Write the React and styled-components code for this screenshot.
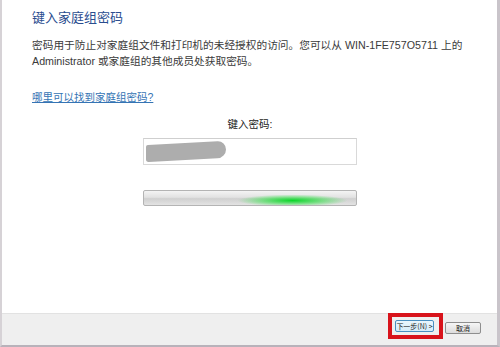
import React from "react";
import styled, { createGlobalStyle } from "styled-components";

const Global = createGlobalStyle`
  html, body {
    margin: 0;
    padding: 0;
    background: #ffffff;
  }
  body {
    font-family: "Liberation Sans", "Noto Sans CJK SC", sans-serif;
  }
`;

const Window = styled.div`
  width: 500px;
  height: 347px;
  box-sizing: border-box;
  display: flex;
  flex-direction: column;
  border-left: 2px solid #d6d2d6;
  border-right: 3px solid #c9c4ca;
  border-bottom: 2px solid #b8b2ba;
  background: #fff;
`;

const Body = styled.div`
  flex: 1;
  padding: 10px 0 0 30px;
  display: flex;
  flex-direction: column;
`;

const Row = styled.div`
  height: 16px;
  line-height: 16px;
  white-space: nowrap;
  font-size: ${(p) => p.$size || 10.7}px;
`;

const Title = styled(Row)`
  font-size: 13px;
  color: #2a4d8f;
`;

const Desc = styled.div`
  margin-top: 11px;
  color: #3a3a3a;
`;

const Link = styled(Row).attrs({ as: "a" })`
  display: block;
  margin-top: 20px;
  font-size: 10.5px;
  color: #3574b4;
  text-decoration: underline;
  align-self: flex-start;
`;

const Center = styled.div`
  width: 214px;
  margin: 11px 0 0 111px;
  display: flex;
  flex-direction: column;
  align-items: stretch;
`;

const Label = styled(Row)`
  text-align: center;
  font-size: 10.5px;
  color: #222;
`;

const Input = styled.div`
  margin-top: 6px;
  height: 27px;
  box-sizing: border-box;
  border: 1px solid #d9d9d9;
  border-top-color: #cfcfcf;
  position: relative;
  background: #fff;
`;

const Scribble = styled.div`
  position: absolute;
  left: 2px;
  top: 4px;
  width: 80px;
  height: 17px;
  background: #adadad;
  border-radius: 2px 9px 9px 3px;
  transform: skewY(-3deg);
`;

const Progress = styled.div`
  margin-top: 25px;
  height: 16px;
  box-sizing: border-box;
  border: 1px solid #b4b4b4;
  border-radius: 2px;
  background:
    radial-gradient(ellipse 55px 6px at 70% 68%, rgba(10, 215, 40, 1), rgba(60, 225, 80, 0.6) 55%, rgba(255,255,255,0) 100%),
    linear-gradient(#f4f4f4, #e2e2e2 45%, #d0d0d0 55%, #e3e3e3);
`;

const Footer = styled.div`
  height: 32px;
  box-sizing: border-box;
  border-top: 1px solid #e2e2e2;
  background: #efefef;
  display: flex;
  justify-content: flex-end;
  align-items: flex-start;
  gap: 2px;
  padding-right: 16px;
`;

const Highlight = styled.div`
  margin-top: -1px;
  border: 4px solid #d8131b;
  padding: 3px 5px 3px 3px;
  display: flex;
`;

const Button = styled.button`
  height: 12px;
  width: ${(p) => p.$w}px;
  margin-top: ${(p) => p.$top || 0}px;
  padding: 0;
  font-family: "Noto Sans CJK SC", sans-serif;
  font-size: 7px;
  line-height: 10px;
  white-space: nowrap;
  color: #222;
  border: 1px solid ${(p) => (p.$primary ? "#4a8fc0" : "#8e8e8e")};
  border-radius: 2px;
  background: ${(p) =>
    p.$primary
      ? "linear-gradient(#eaf6fd, #d4ecfa)"
      : "linear-gradient(#f6f6f6, #dcdcdc)"};
`;

export default function App() {
  return (
    <>
      <Global />
      <Window>
        <Body>
          <Title>键入家庭组密码</Title>
          <Desc>
            <Row>密码用于防止对家庭组文件和打印机的未经授权的访问。您可以从 WIN-1FE757O5711 上的</Row>
            <Row>Administrator 或家庭组的其他成员处获取密码。</Row>
          </Desc>
          <Link href="#">哪里可以找到家庭组密码?</Link>
          <Center>
            <Label>键入密码:</Label>
            <Input>
              <Scribble />
            </Input>
            <Progress />
          </Center>
        </Body>
        <Footer>
          <Highlight>
            <Button $primary $w={39}>下一步(N) &gt;</Button>
          </Highlight>
          <Button $w={36} $top={8}>取消</Button>
        </Footer>
      </Window>
    </>
  );
}
